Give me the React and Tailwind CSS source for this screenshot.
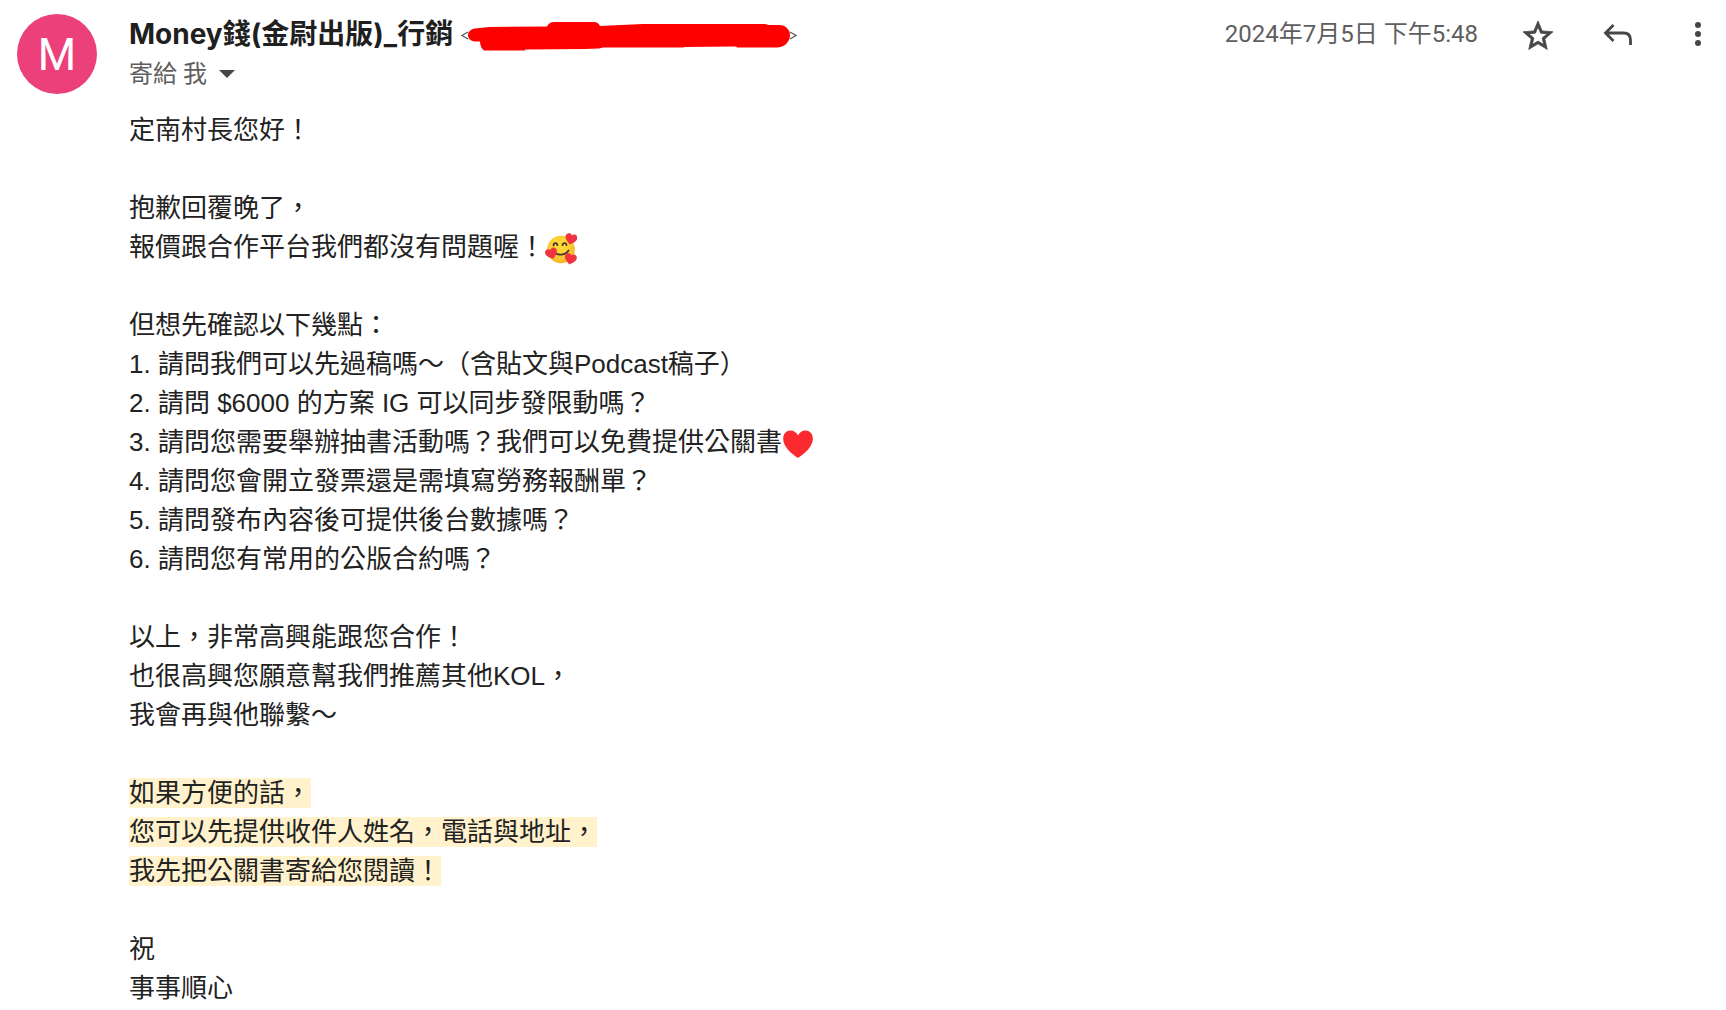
const fontBody = "font-['Liberation_Sans','Noto_Sans_CJK_TC',sans-serif]"
const fontHeader = "font-['Roboto','Noto_Sans_CJK_TC',sans-serif]"
const fontSender = "font-['Inter','Noto_Sans_CJK_TC',sans-serif]"

const questions = [
  '請問我們可以先過稿嗎～（含貼文與Podcast稿子）',
  '請問 $6000 的方案 IG 可以同步發限動嗎？',
  '請問您需要舉辦抽書活動嗎？我們可以免費提供公關書',
  '請問您會開立發票還是需填寫勞務報酬單？',
  '請問發布內容後可提供後台數據嗎？',
  '請問您有常用的公版合約嗎？',
]

const highlighted = ['如果方便的話，', '您可以先提供收件人姓名，電話與地址，', '我先把公關書寄給您閱讀！']

function LoveFace() {
  return (
    <svg viewBox="0 0 32 32" className="inline-block size-8 align-middle" role="img" aria-label="smiling face with hearts">
      <defs>
        <radialGradient id="face" cx="0.45" cy="0.4" r="0.6">
          <stop offset="0.4" stopColor="#fdd835" />
          <stop offset="1" stopColor="#f6b526" />
        </radialGradient>
        <path id="miniHeart" d="M0 5.500C-3 3.500-6 1-6-1.800C-6-4-4.300-5.200-2.600-5.200C-1.300-5.200-.4-4.500 0-3.500C.4-4.500 1.300-5.200 2.600-5.200C4.300-5.200 6-4 6-1.800C6 1 3 3.500 0 5.500Z" />
      </defs>
      <circle cx="16" cy="16.500" r="13.800" fill="url(#face)" />
      <g fill="none" stroke="#4e342e" strokeWidth="1.800" strokeLinecap="round">
        <path d="M8.500 12.500C8.800 9.400 12 9.400 12.400 12.200" />
        <path d="M17.500 12.200C17.900 9.400 21.100 9.400 21.500 12.200" />
        <path d="M9.500 19C12.500 23 20.500 22.500 23.500 17.500" />
      </g>
      <g fill="#f0343f">
        <use href="#miniHeart" transform="translate(26 6) rotate(14)" />
        <use href="#miniHeart" transform="translate(6.500 20.500) rotate(-18)" />
        <use href="#miniHeart" transform="translate(25.500 26) rotate(12)" />
      </g>
    </svg>
  )
}

function Heart() {
  return (
    <svg viewBox="0 0 32 32" className="inline-block size-8 align-middle" role="img" aria-label="heart">
      <path
        d="M16 30C13 28 1.200 20.500 1.200 10.500C1.200 5.600 4.500 2.500 8.500 2.500C12 2.500 14.800 4.600 16 7.500C17.200 4.600 20 2.500 23.500 2.500C27.500 2.500 30.800 5.600 30.800 10.500C30.800 20.500 19 28 16 30Z"
        fill="#fb2a2e"
      />
    </svg>
  )
}

function RedactedAddress() {
  return (
    <svg viewBox="0 0 336 36" className="h-9 w-[336px] shrink-0" aria-hidden="true">
      <path d="M7 16L1 19.500L7 23M329 16L335 19.500L329 23" fill="none" stroke="#5e5e5e" strokeWidth="1.300" />
      <path
        d="M14 12.500L28 11L86 10.500Q88 6 93 6H133Q137 6 139 10L160 9L182 8H304L308 9H318C325 9 329 14 329 19C329 26 323 31.500 316 31.500H276L275 30.500L224 31L222 31.500H142L138 32.500L124 33L64 33.500V34.500H23Q19 31 19 25.500H14C9 25 7 22 7 19C7 16 10 13 14 12.500Z"
        fill="#ff0000"
      />
    </svg>
  )
}

function MailHeader() {
  return (
    <header className={`flex items-start ${fontHeader}`}>
      <div className="flex size-20 shrink-0 items-center justify-center rounded-full bg-[#ec407a] pt-0.5 text-[44px] text-white">M</div>

      <div className="ml-8 min-w-0 flex-1">
        <div className="flex h-10 items-center gap-2">
          <h1 className={`text-[28px] leading-10 font-bold whitespace-nowrap text-[#1f1f1f] ${fontSender}`}>Money錢(金尉出版)_行銷</h1>
          <RedactedAddress />
        </div>
        <button type="button" className="flex h-10 items-center gap-3 text-2xl text-[#5e5e5e]">
          寄給 我
          <svg viewBox="0 0 16 8" className="h-2 w-4" fill="#444746" aria-hidden="true">
            <path d="M0 0H16L8 8Z" />
          </svg>
        </button>
      </div>

      <div className="mr-1.5 flex h-10 shrink-0 items-center text-[#444746]">
        <time dateTime="2024-07-05T17:48" className="text-2xl whitespace-nowrap text-[#5e5e5e]">
          2024年7月5日 下午5:48
        </time>
        <button type="button" aria-label="Star" className="ml-[38px] p-1">
          <svg viewBox="0 0 24 24" className="size-9" fill="currentColor" stroke="currentColor" strokeWidth="0.500">
            <path transform="translate(0 .8)" d="M22 9.740l-7.190-.62L12 2.500 9.190 9.130 2 9.740l5.460 4.730-1.640 7.030L12 17.770l6.180 3.730-1.630-7.030L22 9.740zM12 15.900l-3.760 2.270 1-4.280-3.320-2.880 4.380-.38L12 6.600l1.710 4.040 4.380.38-3.320 2.880 1 4.280L12 15.900z" />
          </svg>
        </button>
        <button type="button" aria-label="Reply" className="ml-9 p-1">
          <svg viewBox="0 0 36 36" className="size-9" fill="none" stroke="currentColor" strokeWidth="2.800">
            <path d="M13.500 9L5.500 17L13.500 25M5.500 17H23.500Q30.500 17 30.500 24V29" />
          </svg>
        </button>
        <button type="button" aria-label="More" className="ml-9 p-1">
          <svg viewBox="0 0 36 36" className="size-9" fill="currentColor">
            <circle cx="18" cy="9" r="3" />
            <circle cx="18" cy="18" r="3" />
            <circle cx="18" cy="27" r="3" />
          </svg>
        </button>
      </div>
    </header>
  )
}

export default function App() {
  return (
    <main lang="zh-Hant" className="min-h-screen bg-white pt-3.5 pl-[17px]">
      <MailHeader />

      <article className={`ml-28 text-[26px] leading-[39px] text-[#222222] ${fontBody}`}>
        <p className="mt-[17px]">定南村長您好！</p>

        <p className="mt-[39px]">抱歉回覆晚了，</p>
        <p className="h-[39px]">
          報價跟合作平台我們都沒有問題喔！
          <LoveFace />
        </p>

        <p className="mt-[39px]">但想先確認以下幾點：</p>
        {questions.map((question, i) => (
          <p key={question} className="h-[39px]">
            {i + 1}. {question}
            {i === 2 && <Heart />}
          </p>
        ))}

        <p className="mt-[39px]">以上，非常高興能跟您合作！</p>
        <p>也很高興您願意幫我們推薦其他KOL，</p>
        <p>我會再與他聯繫～</p>

        <div className="mt-[39px]">
          {highlighted.map((line) => (
            <p key={line}>
              <mark className="bg-[#fff2cc] text-inherit">{line}</mark>
            </p>
          ))}
        </div>

        <p className="mt-[39px]">祝</p>
        <p>事事順心</p>
      </article>
    </main>
  )
}
